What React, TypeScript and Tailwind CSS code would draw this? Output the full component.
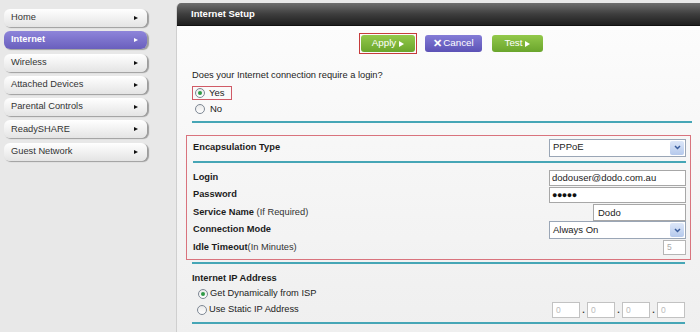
const menu = [
  "Home",
  "Internet",
  "Wireless",
  "Attached Devices",
  "Parental Controls",
  "ReadySHARE",
  "Guest Network",
];

function Arrow({ light, big }: { light?: boolean; big?: boolean }) {
  return (
    <span
      className={
        "h-0 w-0 border-y-transparent " +
        (big ? "border-y-[3px] border-l-[5px] " : "border-y-[2.5px] border-l-[4px] ") +
        (light ? "border-l-white" : "border-l-[#111]")
      }
    />
  );
}

function Radio({ checked }: { checked?: boolean }) {
  return (
    <span className="flex h-[10px] w-[10px] shrink-0 items-center justify-center rounded-full border border-[#7d8794] bg-gradient-to-b from-[#e9e9e9] to-white">
      {checked && <span className="h-[4px] w-[4px] rounded-full bg-[#2f9a46]" />}
    </span>
  );
}

function Select({ value }: { value: string }) {
  return (
    <div className="flex h-[18px] w-[137px] items-center border border-[#9aa6b6] bg-white">
      <span className="flex-1 pl-[3px] text-[9.5px] text-[#222]">{value}</span>
      <span className="mr-[1px] flex h-[14px] w-[14px] items-center justify-center rounded-[2px] bg-gradient-to-b from-[#dde7f8] to-[#b5c9ec]">
        <svg width="7" height="5" viewBox="0 0 7 5">
          <path d="M1 1l2.5 2.5L6 1" stroke="#3a5d9c" strokeWidth="1.5" fill="none" />
        </svg>
      </span>
    </div>
  );
}

function Field({ label, sub, children }: { label: string; sub?: string; children: React.ReactNode }) {
  return (
    <div className="flex h-[17.5px] items-center justify-between">
      <span className="text-[9.3px] font-bold text-[#1c1c1c]">
        {label}
        {sub && <span className="font-normal text-[#333]">{sub}</span>}
      </span>
      {children}
    </div>
  );
}

function TealLine({ w }: { w: string }) {
  return <div className={"h-[2px] bg-[#46a6b6] " + w} />;
}

export default function App() {
  return (
    <div className="flex h-[332px] w-[700px] overflow-hidden bg-[#e8e8e8] font-['Liberation_Sans',Arial,sans-serif]">
      <aside className="flex w-[176px] shrink-0 flex-col gap-[4.3px] pl-[4px] pt-[9px]">
        {menu.map((m) => {
          const active = m === "Internet";
          return (
            <div
              key={m}
              className={
                "flex h-[18px] w-[143px] items-center justify-between rounded-[6px] pl-[7px] pr-[9px] shadow-[1.5px_1px_1px_rgba(0,0,0,0.32)] " +
                (active
                  ? "bg-gradient-to-b from-[#8e85da] to-[#6a5fbd] font-bold text-white"
                  : "bg-gradient-to-b from-white to-[#e4e4e4] text-[#333]")
              }
            >
              <span className="text-[9.3px]">{m}</span>
              <Arrow light={active} />
            </div>
          );
        })}
      </aside>

      <main className="mt-[3px] flex w-[540px] shrink-0 flex-col overflow-hidden rounded-tl-[5px] border-l border-[#cfcfcf] bg-gradient-to-b from-[#fdfdfd] to-[#efefef]">
        <div className="flex h-[23px] shrink-0 items-center border-b border-[#111] bg-gradient-to-b from-[#6e6e6e] via-[#3e3e3e] to-[#1f1f1f] pl-[14px]">
          <span className="text-[9.5px] font-bold text-white">Internet Setup</span>
        </div>

        <div className="mt-[7px] flex h-[21px] items-center pl-[182px]">
          <div className="h-[21px] w-[58px] border border-[#c63b3b] p-[1px]">
            <div className="flex h-full w-full items-center justify-center gap-[3px] rounded-[3px] bg-gradient-to-b from-[#93c94a] to-[#6aa52c] text-[9.8px] text-white">
              Apply <Arrow light big />
            </div>
          </div>
          <div className="ml-[8px] flex h-[17px] w-[57px] items-center justify-center rounded-[3px] bg-gradient-to-b from-[#837bd6] to-[#5c52b6] text-[9.8px] text-white">
            <span className="mr-[1px] text-[11px] font-bold leading-none">✕</span>Cancel
          </div>
          <div className="ml-[10px] flex h-[17px] w-[51px] items-center justify-center gap-[3px] rounded-[3px] bg-gradient-to-b from-[#93c94a] to-[#6aa52c] text-[9.8px] text-white">
            Test <Arrow light big />
          </div>
        </div>

        <div className="pl-[15px]">
          <div className="mt-[16px] flex h-[12px] items-center text-[9.3px] text-[#1c1c1c]">
            Does your Internet connection require a login?
          </div>
          <div className="mt-[4px] flex h-[14px] w-[40px] items-center gap-[4px] border border-[#d05a66] pl-[2px] text-[9.5px] text-[#222]">
            <Radio checked /> Yes
          </div>
          <div className="mt-[2px] flex h-[14px] items-center gap-[5px] pl-[3px] text-[9.5px] text-[#222]">
            <Radio /> No
          </div>
          <div className="mt-[5px]">
            <TealLine w="w-[500px]" />
          </div>
        </div>

        <div className="ml-[9px] mt-[12px] flex h-[125px] w-[505px] flex-col border border-[#d9737d] pl-[6px] pr-[4px] pt-[2px]">
          <div className="flex h-[19px] items-center justify-between">
            <span className="text-[9.3px] font-bold text-[#1c1c1c]">Encapsulation Type</span>
            <Select value="PPPoE" />
          </div>
          <div className="mt-[4px]">
            <TealLine w="w-[493px]" />
          </div>
          <div className="mt-[6px] flex flex-col">
            <Field label="Login">
              <div className="flex h-[16px] w-[137px] items-center border border-[#a7a7a7] bg-white pl-[2px] text-[9.5px] text-[#222]">
                dodouser@dodo.com.au
              </div>
            </Field>
            <Field label="Password">
              <div className="flex h-[16px] w-[137px] items-center border border-[#a7a7a7] bg-white pl-[2px] text-[9px] tracking-[-0.5px] text-[#111]">
                ●●●●●
              </div>
            </Field>
            <Field label="Service Name" sub=" (If Required)">
              <div className="flex h-[17px] w-[93px] items-center border border-[#a7a7a7] bg-white pl-[4px] text-[9.5px] text-[#222]">
                Dodo
              </div>
            </Field>
            <Field label="Connection Mode">
              <Select value="Always On" />
            </Field>
            <Field label="Idle Timeout" sub="(In Minutes)">
              <div className="flex h-[15px] w-[23px] items-center border border-[#b5b5b5] bg-white pl-[3px] text-[8.5px] text-[#aaa]">
                5
              </div>
            </Field>
          </div>
        </div>

        <div className="pl-[15px]">
          <div className="mt-[2px]">
            <TealLine w="w-[493px]" />
          </div>
          <div className="mt-[9px] flex h-[12px] items-center text-[9.3px] font-bold text-[#1c1c1c]">
            Internet IP Address
          </div>
          <div className="mt-[1.5px] flex h-[15px] items-center gap-[2px] pl-[6px] text-[9.3px] text-[#222]">
            <Radio checked /> Get Dynamically from ISP
          </div>
          <div className="flex h-[17px] w-[493px] items-center justify-between">
            <div className="flex items-center gap-[2px] pl-[5px] text-[9.3px] text-[#222]">
              <Radio /> Use Static IP Address
            </div>
            <div className="flex items-center">
              {[0, 1, 2, 3].map((i) => (
                <div key={i} className="flex items-center">
                  {i > 0 && (
                    <span className="flex w-[7px] justify-center text-[9px] font-bold leading-none text-[#333]">.</span>
                  )}
                  <div className="flex h-[16px] w-[28px] items-center border border-[#c2c2c2] bg-white pl-[3px] text-[8.5px] text-[#bbb]">
                    0
                  </div>
                </div>
              ))}
            </div>
          </div>
          <div className="mt-[3px]">
            <TealLine w="w-[493px]" />
          </div>
        </div>
      </main>
    </div>
  );
}
